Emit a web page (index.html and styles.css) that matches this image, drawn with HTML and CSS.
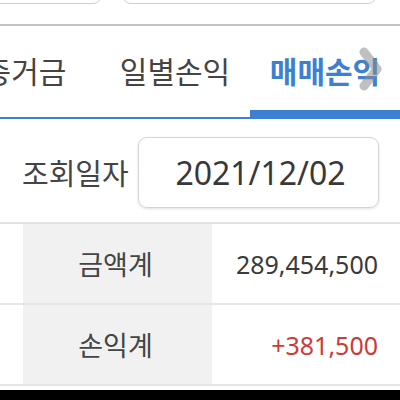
FILE: index.html
```html
<!DOCTYPE html>
<html lang="ko">
<head>
<meta charset="utf-8">
<link rel="stylesheet" href="styles.css">
</head>
<body>
<div class="topbar">
  <div class="topbtn topbtn-left"></div>
  <div class="topbtn topbtn-right"></div>
</div>
<div class="tabs">
  <div class="tab-track">
    <div class="tab">증거금</div>
    <div class="tab">일별손익</div>
    <div class="tab active">매매손익</div>
  </div>
  <svg class="chevron" width="28" height="46" viewBox="0 0 28 46">
    <polyline points="7,6 20,23 7,40" fill="none" stroke="rgba(140,140,140,0.55)" stroke-width="9" stroke-linecap="round" stroke-linejoin="round"/>
  </svg>
</div>
<div class="query">
  <span class="query-label">조회일자</span>
  <div class="date-box">2021/12/02</div>
</div>
<div class="table">
  <div class="row">
    <div class="cell-edge"></div>
    <div class="cell-head">금액계</div>
    <div class="cell-val">289,454,500</div>
  </div>
  <div class="row">
    <div class="cell-edge"></div>
    <div class="cell-head">손익계</div>
    <div class="cell-val plus">+381,500</div>
  </div>
</div>
<div class="gap"></div>
<div class="blackbar"></div>
</body>
</html>
```
FILE: styles.css
```css
* { box-sizing: border-box; }
html, body { margin: 0; padding: 0; background: #fff; }
body {
  width: 400px;
  height: 400px;
  overflow: hidden;
  font-family: "Noto Sans", "Noto Sans CJK KR", sans-serif;
  color: #444;
}
.topbar {
  height: 26px;
  border-bottom: 2px solid #c4c4c4;
  display: flex;
  align-items: flex-start;
  overflow: hidden;
}
.topbtn {
  height: 40px;
  margin-top: -36px;
  border: 1.5px solid #cfcfcf;
  border-radius: 9px;
  background: #fff;
}
.topbtn-left { width: 122px; margin-left: -20px; }
.topbtn-right { width: 255px; margin-left: 20px; }

.tabs {
  position: relative;
  height: 93px;
  overflow: hidden;
}
.tab-track {
  display: flex;
  margin-left: -50px;
  height: 100%;
}
.tab {
  flex: 0 0 150px;
  height: 100%;
  text-align: center;
  font-size: 30px;
  line-height: 40px;
  padding-top: 26px;
  color: #444;
  border-bottom: 2px solid #3d7fd0;
  white-space: nowrap;
}
.tab.active {
  color: #3d7fd0;
  font-weight: 700;
  border-bottom-width: 9px;
}
.chevron {
  position: absolute;
  left: 357px;
  top: 20px;
}
.query {
  height: 105px;
  border-bottom: 2px solid #e2e2e2;
  display: flex;
  align-items: center;
  padding-left: 22px;
  padding-top: 3px;
}
.query-label {
  font-size: 29px;
  color: #444;
  width: 116px;
  white-space: nowrap;
}
.date-box {
  width: 241px;
  height: 71px;
  border: 1.5px solid #d4d4d4;
  border-radius: 9px;
  box-shadow: 0 1px 3px rgba(0,0,0,0.12);
  display: flex;
  align-items: center;
  justify-content: center;
  font-size: 32px;
  color: #383838;
  padding-left: 4px;
}
.row {
  display: flex;
  height: 81px;
  border-bottom: 2px solid #e6e6e6;
}
.cell-edge { width: 23px; }
.cell-head {
  width: 189px;
  background: #f1f1f1;
  display: flex;
  align-items: center;
  justify-content: center;
  font-size: 27px;
  color: #444;
  padding-right: 4px;
}
.cell-val {
  flex: 1;
  display: flex;
  align-items: center;
  justify-content: flex-end;
  padding-right: 22px;
  font-size: 25px;
  color: #3a3a3a;
}
.cell-val.plus { color: #d03a35; }
.gap { height: 4px; }
.blackbar { height: 20px; background: #000; }
```
